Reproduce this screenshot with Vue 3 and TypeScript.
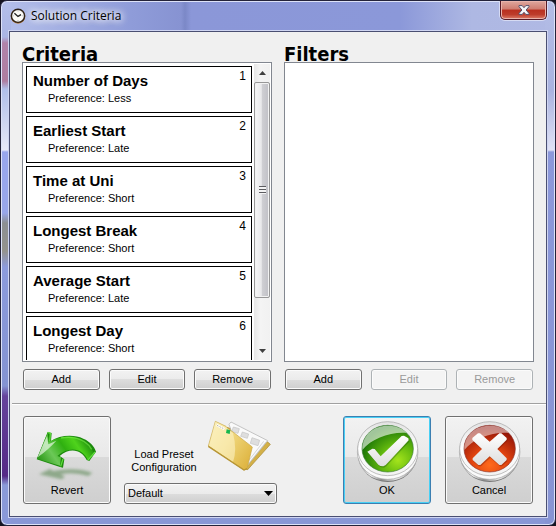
<script setup lang="ts">
import { ref } from 'vue'

interface Criterion {
  name: string
  preference: string
}

const criteria = ref<Criterion[]>([
  { name: 'Number of Days', preference: 'Less' },
  { name: 'Earliest Start', preference: 'Late' },
  { name: 'Time at Uni', preference: 'Short' },
  { name: 'Longest Break', preference: 'Short' },
  { name: 'Average Start', preference: 'Late' },
  { name: 'Longest Day', preference: 'Short' },
])

const preset = ref('Default')
const list = ref<HTMLOListElement | null>(null)

function scrollList(amount: number) {
  list.value?.scrollBy({ top: amount })
}
</script>

<template>
  <div class="window">
    <header class="titlebar">
      <svg class="clock" viewBox="0 0 16 16" aria-hidden="true">
        <circle cx="8" cy="8.4" r="7.3" fill="#b8762c" />
        <circle cx="8" cy="7.8" r="7.3" fill="#2b2118" />
        <circle cx="8" cy="7.8" r="5.9" fill="#fbfaf6" />
        <path d="M4.4 5.2 8 8.4 11 6.6" fill="none" stroke="#222" stroke-width="1.3" />
        <path d="M8 2.4v1M8 12.2v1M2.6 7.8h1M12.4 7.8h1" stroke="#888" stroke-width="0.7" />
      </svg>
      <h1 class="caption">Solution Criteria</h1>
      <button class="close" type="button" aria-label="Close">
        <svg viewBox="0 0 12 10" aria-hidden="true">
          <path d="M1 .6h3.2L6 2.7 7.8.6H11v1L8.1 5 11 8.4v1H7.8L6 7.3 4.2 9.4H1v-1L3.9 5 1 1.6z" fill="#f6f6f8" stroke="#54506a" stroke-width="1" />
        </svg>
      </button>
    </header>

    <main class="client">
      <div class="columns">
        <section class="column">
          <h2 class="heading">Criteria</h2>
          <div class="listbox">
            <ol ref="list" class="items">
              <li v-for="(item, index) in criteria" :key="item.name" class="item">
                <div>
                  <h3 class="name">{{ item.name }}</h3>
                  <p class="preference">Preference: {{ item.preference }}</p>
                </div>
                <span class="rank">{{ index + 1 }}</span>
              </li>
            </ol>
            <div class="scrollbar">
              <button class="arrow" type="button" aria-label="Scroll up" @click="scrollList(-50)">
                <svg viewBox="0 0 7 4" aria-hidden="true"><path d="M0 4 3.5 0 7 4z" fill="#404040" /></svg>
              </button>
              <div class="track">
                <div class="thumb"><span class="grip"></span></div>
              </div>
              <button class="arrow" type="button" aria-label="Scroll down" @click="scrollList(50)">
                <svg viewBox="0 0 7 4" aria-hidden="true"><path d="M0 0h7L3.5 4z" fill="#404040" /></svg>
              </button>
            </div>
          </div>
          <div class="actions">
            <button class="button" type="button">Add</button>
            <button class="button" type="button">Edit</button>
            <button class="button" type="button">Remove</button>
          </div>
        </section>

        <section class="column">
          <h2 class="heading">Filters</h2>
          <div class="listbox"></div>
          <div class="actions">
            <button class="button" type="button">Add</button>
            <button class="button" type="button" disabled>Edit</button>
            <button class="button" type="button" disabled>Remove</button>
          </div>
        </section>
      </div>

      <hr class="divider" />

      <footer class="footer">
        <button class="button big" type="button">
          <svg class="art" viewBox="0 0 192 192" aria-hidden="true">
            <defs>
              <linearGradient id="arrowFill" x1="0" y1="0.7" x2="1" y2="0.3">
                <stop offset="0" stop-color="#2f9a1c" />
                <stop offset="0.25" stop-color="#6cc858" />
                <stop offset="0.5" stop-color="#2fb010" />
                <stop offset="0.72" stop-color="#4fd31c" />
                <stop offset="1" stop-color="#0f7a08" />
              </linearGradient>
              <filter id="soft" x="-20%" y="-50%" width="140%" height="200%"><feGaussianBlur stdDeviation="5" /></filter>
            </defs>
            <path d="M12 163 45 147 54 153Q120 140 172 158L160 168Q115 154 76 163L90 170 80 178z" fill="#5f8a58" opacity="0.6" filter="url(#soft)" />
            <path d="M5 118 38 36 50 39 48 63C73 46 115 42 145 56 165 64 178 79 183 95L163 123 155 120C142 92 108 78 74 108L88 118 84 143 75 141z" fill="#1c8a0c" />
            <path d="M6 116 38 39 41 67C72 48 112 45 141 60 158 68 172 84 176 98L158 119C144 86 104 76 67 108L78 112 75 137z" fill="url(#arrowFill)" />
            <path d="M8 112 36 48 40 73Q52 67 64 62 42 87 8 112z" fill="#fff" opacity="0.6" />
            <path d="M38 37 46 40 44 65M77 139 84 117M159 120 180 96" fill="none" stroke="#5fdc3c" stroke-width="4" />
            <path d="M78 54Q118 46 148 65 162 74 170 88" fill="none" stroke="#7df04c" stroke-width="4" opacity="0.55" />
          </svg>
          <span>Revert</span>
        </button>

        <div class="preset">
          <div class="preset-top">
            <label class="preset-label" for="preset">Load Preset Configuration</label>
            <svg class="folder" viewBox="0 0 195 159" aria-hidden="true">
              <defs>
                <linearGradient id="folderFill" x1="0" y1="0" x2="1" y2="0.7">
                  <stop offset="0" stop-color="#f7e7a4" />
                  <stop offset="0.5" stop-color="#f0d77c" />
                  <stop offset="1" stop-color="#dfb644" />
                </linearGradient>
              </defs>
              <path d="M60 25 182 69 190 76 122 152 108 148z" fill="#d3b048" stroke="#a68528" stroke-width="2" />
              <path d="M66 16 72 9 182 65 120 141 95 100z" fill="#fafafa" stroke="#aaa" stroke-width="2" />
              <path d="M176 70 121 139M170 67 121 130" stroke="#c4c4c4" stroke-width="2" />
              <g fill="#dedede" stroke="#c2c2c2" stroke-width="2">
                <path d="M79 24 97 29 93 43 74 38zM106 39 125 45 121 58 101 52zM135 56 158 64 153 80 130 73z" />
              </g>
              <path d="M25 7 57 22 64 30 78 39 136 84 120 149 111 153 4 81z" fill="url(#folderFill)" stroke="#c8a748" stroke-width="2" />
              <path d="M25 8 56 24 78 42Q91 92 78 129L6 80z" fill="#fff9d8" opacity="0.5" />
              <path d="M4 82 111 153 120 149" fill="none" stroke="#b79535" stroke-width="4" />
              <path d="M29 18 52 30" stroke="#fff" stroke-width="7" />
              <path d="M30 19 50 29" stroke="#96917c" stroke-width="2" stroke-dasharray="5 3" />
              <path d="M59 31 70 34 68 45 57 42z" fill="#16b74f" />
            </svg>
          </div>
          <div class="select-wrap">
            <select id="preset" v-model="preset" class="select">
              <option>Default</option>
            </select>
            <svg class="chevron" viewBox="0 0 9 5" aria-hidden="true"><path d="M0 0h9L4.5 5z" fill="#000" /></svg>
          </div>
        </div>

        <div class="confirm">
          <button class="button big default" type="button">
            <svg class="art" viewBox="0 0 192 192" aria-hidden="true">
              <defs>
                <linearGradient id="rim" x1="0" y1="0" x2="1" y2="0">
                  <stop offset="0" stop-color="#777" />
                  <stop offset="0.2" stop-color="#f4f4f4" />
                  <stop offset="0.4" stop-color="#8c8c8c" />
                  <stop offset="0.65" stop-color="#e8e8e8" />
                  <stop offset="1" stop-color="#888" />
                </linearGradient>
                <linearGradient id="face" x1="0" y1="0" x2="0" y2="1">
                  <stop offset="0" stop-color="#e2e2e2" />
                  <stop offset="0.5" stop-color="#fff" />
                  <stop offset="1" stop-color="#f2f2f2" />
                </linearGradient>
                <radialGradient id="green" cx="0.7" cy="0.75" r="0.75">
                  <stop offset="0" stop-color="#a4e41c" />
                  <stop offset="0.45" stop-color="#62b80e" />
                  <stop offset="1" stop-color="#157006" />
                </radialGradient>
                <linearGradient id="mark" x1="0" y1="0" x2="0" y2="1">
                  <stop offset="0" stop-color="#fff" />
                  <stop offset="1" stop-color="#dedede" />
                </linearGradient>
              </defs>
              <ellipse cx="98" cy="108" rx="86" ry="78" fill="#777" />
              <ellipse cx="98" cy="103" rx="90" ry="80" fill="url(#rim)" />
              <ellipse cx="98" cy="96" rx="91" ry="82" fill="#fafafa" stroke="#aaa" stroke-width="2" />
              <ellipse cx="98" cy="86" rx="90" ry="81" fill="url(#face)" stroke="#a2a2a2" stroke-width="2" />
              <ellipse cx="98" cy="86" rx="77" ry="70" fill="url(#green)" stroke="#3d7c35" stroke-width="2" />
              <path d="M22 90C22 44 56 17 98 17c25 0 44 8 58 22C105 35 50 56 22 90z" fill="#fff" opacity="0.6" />
              <path d="M37 95 52 86 59 87 77 109 140 48 147 47 160 55 161 61 92 135 85 139 76 138 70 134z" fill="#194f0c" opacity="0.35" transform="translate(2 4)" />
              <path d="M37 95 52 86 59 87 77 109 140 48 147 47 160 55 161 61 92 135 85 139 76 138 70 134z" fill="url(#mark)" />
            </svg>
            <span>OK</span>
          </button>
          <button class="button big" type="button">
            <svg class="art" viewBox="0 0 192 192" aria-hidden="true">
              <defs>
                <radialGradient id="red" cx="0.5" cy="0.85" r="0.8">
                  <stop offset="0" stop-color="#ff6a1c" />
                  <stop offset="0.45" stop-color="#e0430f" />
                  <stop offset="1" stop-color="#8c1007" />
                </radialGradient>
              </defs>
              <ellipse cx="98" cy="108" rx="86" ry="78" fill="#777" />
              <ellipse cx="98" cy="103" rx="90" ry="80" fill="url(#rim)" />
              <ellipse cx="98" cy="96" rx="91" ry="82" fill="#fafafa" stroke="#aaa" stroke-width="2" />
              <ellipse cx="98" cy="86" rx="90" ry="81" fill="url(#face)" stroke="#a2a2a2" stroke-width="2" />
              <ellipse cx="98" cy="86" rx="77" ry="70" fill="url(#red)" stroke="#8c342b" stroke-width="2" />
              <path d="M22 90C22 44 56 17 98 17c25 0 44 8 58 22C105 35 50 56 22 90z" fill="#fff" opacity="0.5" />
              <path d="M46 54 63 40 69 40 98 65 127 40 133 40 149 54 149 59 121 87 149 115 149 120 133 135 127 135 98 109 70 135 64 135 47 120 47 115 75 87 46 60z" fill="#641208" opacity="0.35" transform="translate(2 4)" />
              <path d="M46 54 63 40 69 40 98 65 127 40 133 40 149 54 149 59 121 87 149 115 149 120 133 135 127 135 98 109 70 135 64 135 47 120 47 115 75 87 46 60z" fill="url(#mark)" />
            </svg>
            <span>Cancel</span>
          </button>
        </div>
      </footer>
    </main>
  </div>
</template>

<style>
body {
  background: #15141f;
}
</style>

<style scoped>
* {
  box-sizing: border-box;
}

h1,
h2,
h3,
p,
ol {
  margin: 0;
  padding: 0;
}

.window {
  display: flex;
  flex-direction: column;
  height: 100vh;
  padding: 0 8px 8px;
  border: 1px solid #24233a;
  border-radius: 7px;
  overflow: hidden;
  font-family: "Liberation Sans", Arial, sans-serif;
  font-size: 11px;
  line-height: 13px;
  color: #000;
  box-shadow: inset 0 0 0 1px #dde2f8;
  background:
    linear-gradient(
      to bottom,
      #b4bfea 0, #aab5e4 36px, #b183aa 42px, #ae7da0 80px, #b0bee8 88px, #e6e8f8 149px,
      #98a6ec 151px, #98a6ea 212px, #8c8f93 222px, #94938e 250px, #8c9bdc 266px, #8493d2 385px,
      #65439c 395px, #552a86 475px, #8a9ad8 484px, #8a98d8 100%
    ) left / 10px 100% no-repeat,
    linear-gradient(to bottom, #b4bde6 0, #a9b3e0 90px, #e0e2f5 149px, #8c98da 151px, #8794d3 100%) right / 10px 100% no-repeat,
    linear-gradient(to right, #b5c0ea 0, #8f9cd9 130px, #8793d2 180px, #7b88c7 184px, #8b97d8 190px, #8b98d9 72%, #aeb8e3 85%, #b0b9e4 100%) top / 100% 40px no-repeat,
    #8997d6;
}

.titlebar {
  display: flex;
  align-items: center;
  height: 30px;
  padding-left: 1px;
}

.clock {
  width: 16px;
  height: 16px;
}

.caption {
  margin-left: 5px;
  font: 400 12px/16px "Open Sans", "Noto Sans", sans-serif;
  text-shadow: 0 0 6px #fff, 0 0 8px #fff, 0 0 10px #fff;
}

.close {
  display: flex;
  align-items: center;
  justify-content: center;
  align-self: flex-start;
  width: 47px;
  height: 19px;
  margin-left: auto;
  padding: 0;
  border: 1px solid #571a26;
  border-top: 0;
  border-radius: 0 0 5px 5px;
  background: linear-gradient(#dfa79e 0, #cf7c70 45%, #b92f1f 50%, #bd3c2b 75%, #dd7c68 100%);
  box-shadow: inset 0 0 0 1px #e9b3ab, 0 0 0 1px #d6dbf3;
}

.close svg {
  width: 12px;
  height: 10px;
}

.client {
  display: flex;
  flex-direction: column;
  flex: 1;
  min-height: 0;
  border: 1px solid #4a4f72;
  outline: 1px solid #cfd5f2;
  background: #f0f0f0;
}

.columns {
  display: grid;
  grid-template-columns: 1fr 1fr;
  gap: 12px;
  flex: 1;
  min-height: 0;
  padding: 0 12px;
}

.column {
  display: flex;
  flex-direction: column;
  min-width: 0;
  min-height: 0;
}

.heading {
  height: 30px;
  padding-top: 9px;
  font: 700 20px/26px "DejaVu Sans Condensed", "DejaVu Sans", sans-serif;
}

.listbox {
  display: flex;
  gap: 2px;
  flex: 1;
  min-height: 0;
  padding: 1px 1px 1px 3px;
  border: 1px solid #828790;
  background: #fff;
}

.items {
  display: flex;
  flex-direction: column;
  gap: 3px;
  flex: 1;
  min-width: 0;
  padding-top: 2px;
  overflow: hidden;
  list-style: none;
}

.item {
  display: flex;
  flex: none;
  justify-content: space-between;
  height: 47px;
  padding: 5px 5px 0 6px;
  border: 1px solid #000;
}

.name {
  font-size: 15px;
  font-weight: 700;
  line-height: 18px;
}

.preference {
  padding-left: 15px;
  line-height: 16px;
}

.rank {
  font-size: 12px;
  line-height: 9px;
}

.scrollbar {
  display: flex;
  flex-direction: column;
  width: 16px;
  background: linear-gradient(to right, #e6e6e6, #f4f4f4 40%, #f1f1f1);
}

.arrow {
  display: flex;
  align-items: center;
  justify-content: center;
  height: 18px;
  padding: 0;
  border: 0;
  background: transparent;
}

.arrow svg {
  width: 7px;
  height: 4px;
}

.track {
  flex: 1;
}

.thumb {
  display: flex;
  align-items: center;
  justify-content: center;
  height: 83%;
  border: 1px solid #979797;
  border-radius: 2px;
  background: linear-gradient(to right, #f7f7f7 0, #e9e9eb 45%, #cfcfd3 52%, #c0c0c6 100%);
  box-shadow: inset 0 0 0 1px #f2f2f2;
}

.grip {
  width: 7px;
  height: 8px;
  background: repeating-linear-gradient(#5c5c60 0 1px, #f4f4f4 1px 3px);
}

.actions {
  display: grid;
  grid-template-columns: repeat(3, 1fr);
  gap: 9px;
  padding: 7px 1px 0;
}

.button,
.select {
  height: 21px;
  border: 1px solid #707070;
  border-radius: 3px;
  background: linear-gradient(#f2f2f2 0, #ebebeb 50%, #dddddd 50%, #cfcfcf 100%);
  box-shadow: inset 0 0 0 1px #fbfbfb;
  font: inherit;
  color: #000;
}

.button {
  padding: 0;
  text-align: center;
}

.button:disabled {
  border-color: #adb2b5;
  background: #f4f4f4;
  color: #9a9a9a;
}

.divider {
  width: calc(100% - 2px);
  height: 2px;
  margin: 13px 0 0 2px;
  border: 0;
  border-top: 1px solid #a0a0a0;
  background: #fff;
}

.footer {
  display: flex;
  padding: 11px 13px 12px;
}

.button.big {
  display: flex;
  flex-direction: column;
  align-items: center;
  width: 88px;
  height: 88px;
  padding-top: 3px;
  background: linear-gradient(#f2f2f2 0, #e9e9e9 46%, #dadada 47%, #cfcfcf 100%);
}

.default {
  border-color: #3c7fb1;
  box-shadow: inset 0 0 0 1px #48d0f5;
}

.art {
  width: 64px;
  height: 64px;
}

.preset {
  display: flex;
  flex-direction: column;
  justify-content: space-between;
  width: 153px;
  margin-left: 13px;
}

.preset-top {
  display: flex;
  justify-content: space-between;
  padding: 3px 5px 0 0;
}

.preset-label {
  width: 80px;
  padding-top: 29px;
  text-align: center;
}

.folder {
  width: 65px;
  height: 53px;
}

.select-wrap {
  position: relative;
}

.select {
  display: block;
  width: 100%;
  padding: 0 16px 0 3px;
  appearance: none;
}

.chevron {
  position: absolute;
  top: 8px;
  right: 4px;
  width: 9px;
  height: 5px;
  pointer-events: none;
}

.confirm {
  display: flex;
  gap: 14px;
  margin-left: auto;
}
</style>
